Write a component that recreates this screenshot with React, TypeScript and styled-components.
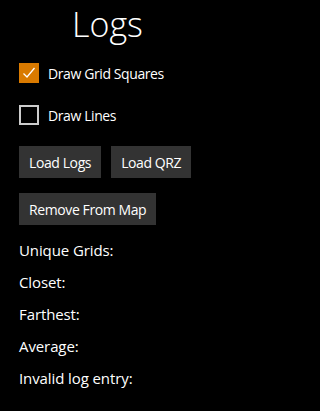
import { useState } from 'react';
import styled, { createGlobalStyle } from 'styled-components';

const STATS = ['Unique Grids:', 'Closet:', 'Farthest:', 'Average:', 'Invalid log entry:'];

const GlobalStyle = createGlobalStyle`
  html, body {
    margin: 0;
    padding: 0;
    background: #000;
  }
  body {
    font-family: 'Open Sans', 'Noto Sans', sans-serif;
    color: #fff;
  }
`;

const Panel = styled.div`
  width: 215px;
  height: 411px;
  background: #000;
  padding: 0 0 0 19px;
  box-sizing: border-box;
`;

const Title = styled.h1`
  margin: 1px 0 0 -19px;
  font-size: 34px;
  line-height: 46px;
  font-weight: 300;
  text-align: center;
`;

const CheckRow = styled.label<{ $top: number }>`
  display: flex;
  align-items: center;
  gap: 9px;
  height: 20px;
  margin-top: ${({ $top }) => $top}px;
  font-size: 14px;
  letter-spacing: -0.4px;
  cursor: pointer;
`;

const Box = styled.span<{ $checked: boolean }>`
  width: 20px;
  height: 20px;
  box-sizing: border-box;
  display: flex;
  align-items: center;
  justify-content: center;
  background: ${({ $checked }) => ($checked ? '#d97a00' : 'transparent')};
  border: ${({ $checked }) => ($checked ? 'none' : '2px solid #cccccc')};
`;

const ButtonRow = styled.div<{ $top: number }>`
  display: flex;
  gap: 10px;
  margin-top: ${({ $top }) => $top}px;
`;

const Button = styled.button`
  height: 32px;
  padding: 0 10px;
  border: none;
  background: #333333;
  color: #fff;
  font-family: inherit;
  font-size: 14px;
  letter-spacing: -0.4px;
  cursor: pointer;
`;

const Stats = styled.div`
  margin-top: 9px;
  display: flex;
  flex-direction: column;
`;

const Stat = styled.div`
  font-size: 15px;
  line-height: 32px;
  letter-spacing: -0.1px;
`;

function Check({ label, checked, top, onToggle }: { label: string; checked: boolean; top: number; onToggle: () => void }) {
  return (
    <CheckRow $top={top} onClick={onToggle}>
      <Box $checked={checked}>
        {checked && (
          <svg width="14" height="14" viewBox="0 0 14 14">
            <path d="M1.5 7.5 L5 11 L12.5 2" fill="none" stroke="#fff" strokeWidth="1.3" />
          </svg>
        )}
      </Box>
      {label}
    </CheckRow>
  );
}

export default function App() {
  const [grid, setGrid] = useState(true);
  const [lines, setLines] = useState(false);

  return (
    <>
      <GlobalStyle />
      <Panel>
        <Title>Logs</Title>
        <Check label="Draw Grid Squares" checked={grid} top={16} onToggle={() => setGrid(!grid)} />
        <Check label="Draw Lines" checked={lines} top={22} onToggle={() => setLines(!lines)} />
        <ButtonRow $top={21}>
          <Button>Load Logs</Button>
          <Button>Load QRZ</Button>
        </ButtonRow>
        <ButtonRow $top={15}>
          <Button>Remove From Map</Button>
        </ButtonRow>
        <Stats>
          {STATS.map((s) => (
            <Stat key={s}>{s}</Stat>
          ))}
        </Stats>
      </Panel>
    </>
  );
}
